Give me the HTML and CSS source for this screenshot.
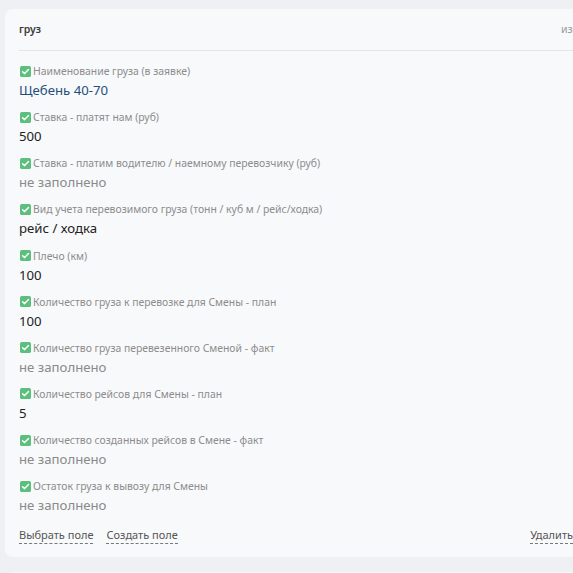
FILE: index.html
```html
<!DOCTYPE html>
<html lang="ru">
<head>
<meta charset="utf-8">
<title>груз</title>
<link rel="stylesheet" href="styles.css">
</head>
<body>
<div class="page">
  <section class="card">
    <header class="card-head">
      <span class="card-title">груз</span>
      <span class="card-action">изменить</span>
    </header>
    <div class="fields">
      <div class="field">
        <div class="label"><svg class="chk" viewBox="0 0 12 12"><rect width="12" height="12" rx="2" fill="#5cbf7d"/><path d="M2.8 6.2 5 8.3 9.3 3.8" fill="none" stroke="#fff" stroke-width="1.6" stroke-linecap="round" stroke-linejoin="round"/></svg>Наименование груза (в заявке)</div>
        <div class="value link">Щебень 40-70</div>
      </div>
      <div class="field">
        <div class="label"><svg class="chk" viewBox="0 0 12 12"><rect width="12" height="12" rx="2" fill="#5cbf7d"/><path d="M2.8 6.2 5 8.3 9.3 3.8" fill="none" stroke="#fff" stroke-width="1.6" stroke-linecap="round" stroke-linejoin="round"/></svg>Ставка - платят нам (руб)</div>
        <div class="value">500</div>
      </div>
      <div class="field">
        <div class="label"><svg class="chk" viewBox="0 0 12 12"><rect width="12" height="12" rx="2" fill="#5cbf7d"/><path d="M2.8 6.2 5 8.3 9.3 3.8" fill="none" stroke="#fff" stroke-width="1.6" stroke-linecap="round" stroke-linejoin="round"/></svg>Ставка - платим водителю / наемному перевозчику (руб)</div>
        <div class="value empty">не заполнено</div>
      </div>
      <div class="field">
        <div class="label"><svg class="chk" viewBox="0 0 12 12"><rect width="12" height="12" rx="2" fill="#5cbf7d"/><path d="M2.8 6.2 5 8.3 9.3 3.8" fill="none" stroke="#fff" stroke-width="1.6" stroke-linecap="round" stroke-linejoin="round"/></svg>Вид учета перевозимого груза (тонн / куб м / рейс/ходка)</div>
        <div class="value">рейс / ходка</div>
      </div>
      <div class="field">
        <div class="label"><svg class="chk" viewBox="0 0 12 12"><rect width="12" height="12" rx="2" fill="#5cbf7d"/><path d="M2.8 6.2 5 8.3 9.3 3.8" fill="none" stroke="#fff" stroke-width="1.6" stroke-linecap="round" stroke-linejoin="round"/></svg>Плечо (км)</div>
        <div class="value">100</div>
      </div>
      <div class="field">
        <div class="label"><svg class="chk" viewBox="0 0 12 12"><rect width="12" height="12" rx="2" fill="#5cbf7d"/><path d="M2.8 6.2 5 8.3 9.3 3.8" fill="none" stroke="#fff" stroke-width="1.6" stroke-linecap="round" stroke-linejoin="round"/></svg>Количество груза к перевозке для Смены - план</div>
        <div class="value">100</div>
      </div>
      <div class="field">
        <div class="label"><svg class="chk" viewBox="0 0 12 12"><rect width="12" height="12" rx="2" fill="#5cbf7d"/><path d="M2.8 6.2 5 8.3 9.3 3.8" fill="none" stroke="#fff" stroke-width="1.6" stroke-linecap="round" stroke-linejoin="round"/></svg>Количество груза перевезенного Сменой - факт</div>
        <div class="value empty">не заполнено</div>
      </div>
      <div class="field">
        <div class="label"><svg class="chk" viewBox="0 0 12 12"><rect width="12" height="12" rx="2" fill="#5cbf7d"/><path d="M2.8 6.2 5 8.3 9.3 3.8" fill="none" stroke="#fff" stroke-width="1.6" stroke-linecap="round" stroke-linejoin="round"/></svg>Количество рейсов для Смены - план</div>
        <div class="value">5</div>
      </div>
      <div class="field">
        <div class="label"><svg class="chk" viewBox="0 0 12 12"><rect width="12" height="12" rx="2" fill="#5cbf7d"/><path d="M2.8 6.2 5 8.3 9.3 3.8" fill="none" stroke="#fff" stroke-width="1.6" stroke-linecap="round" stroke-linejoin="round"/></svg>Количество созданных рейсов в Смене - факт</div>
        <div class="value empty">не заполнено</div>
      </div>
      <div class="field">
        <div class="label"><svg class="chk" viewBox="0 0 12 12"><rect width="12" height="12" rx="2" fill="#5cbf7d"/><path d="M2.8 6.2 5 8.3 9.3 3.8" fill="none" stroke="#fff" stroke-width="1.6" stroke-linecap="round" stroke-linejoin="round"/></svg>Остаток груза к вывозу для Смены</div>
        <div class="value empty">не заполнено</div>
      </div>
    </div>
    <footer class="card-foot">
      <div class="foot-left">
        <span class="dlink">Выбрать поле</span>
        <span class="dlink">Создать поле</span>
      </div>
      <span class="dlink">Удалить</span>
    </footer>
  </section>
  <section class="card next"></section>
</div>
</body>
</html>
```

FILE: styles.css
```css
html, body {
  margin: 0;
  padding: 0;
  background: #eef0f3;
  overflow: hidden;
  width: 573px;
  height: 573px;
}
body {
  font-family: "Noto Sans", "Open Sans", sans-serif;
  color: #222;
}
.page {
  padding: 9px 0 0 5px;
  display: flex;
  flex-direction: column;
  gap: 15px;
  width: 640px;
}
.card {
  background: #f8f9fb;
  border-radius: 8px;
  width: 582px;
  box-sizing: border-box;
}
.card.next {
  height: 60px;
}
.card-head {
  display: flex;
  justify-content: space-between;
  align-items: center;
  margin: 0 0 0 14px;
  padding: 13px 0 14px;
  border-bottom: 1px solid #e3e5e8;
  font-size: 10.5px;
  line-height: 14px;
}
.card-title {
  font-weight: 600;
  color: #3a3a3a;
}
.card-action {
  color: #9a9a9a;
  margin-right: -23px;
}
.fields {
  padding: 12px 14px 0;
  display: flex;
  flex-direction: column;
  gap: 8.15px;
}
.label {
  display: flex;
  align-items: center;
  gap: 2px;
  font-size: 10.4px;
  line-height: 16px;
  color: #8c8c8c;
  white-space: nowrap;
}
.chk {
  width: 11px;
  height: 11px;
  margin-left: 1px;
  flex: none;
}
.value {
  font-size: 13.2px;
  line-height: 22px;
  color: #222;
}
.value.link {
  color: #1f4f7d;
}
.value.empty {
  color: #8a8a8a;
}
.card-foot {
  display: flex;
  justify-content: space-between;
  padding: 10px 14px 13px;
}
.foot-left {
  display: flex;
  gap: 13px;
}
.dlink {
  font-size: 11px;
  line-height: 17px;
  color: #555;
  border-bottom: 1px dashed #777;
}
```
